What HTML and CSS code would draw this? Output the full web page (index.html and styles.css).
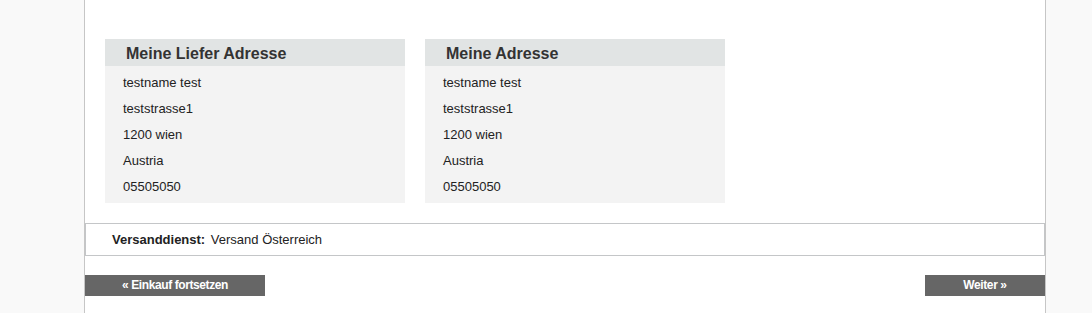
FILE: index.html
```html
<!DOCTYPE html>
<html lang="de">

<head>
    <meta charset="UTF-8" />
    <title>Bestellung - Adressen</title>
    <link rel="stylesheet" href="styles.css">
</head>

<body>
    <div class="page">
        <!-- Adressen -->
        <div class="addresses">
            <div class="address-box">
                <h3>Meine Liefer Adresse</h3>
                <ul>
                    <li>testname test</li>
                    <li>teststrasse1</li>
                    <li>1200 wien</li>
                    <li>Austria</li>
                    <li>05505050</li>
                </ul>
            </div>
            <div class="address-box">
                <h3>Meine Adresse</h3>
                <ul>
                    <li>testname test</li>
                    <li>teststrasse1</li>
                    <li>1200 wien</li>
                    <li>Austria</li>
                    <li>05505050</li>
                </ul>
            </div>
        </div>

        <!-- Versand -->
        <div class="shipping">
            <strong>Versanddienst:</strong> Versand Österreich
        </div>

        <!-- Navigation -->
        <div class="nav-buttons">
            <a href="#" class="btn btn-back">« Einkauf fortsetzen</a>
            <a href="#" class="btn btn-next">Weiter »</a>
        </div>
    </div>
</body>

</html>
```

FILE: styles.css
```css
/* Global */
body {
    margin: 0;
    background: #f9f9f9;
    font-family: "Liberation Sans", Arial, sans-serif;
    font-size: 13px;
    color: #222;
}

.page {
    margin-left: 84px;
    width: 960px;
    min-height: 313px;
    background: #fff;
    border-left: 1px solid #c6c6c6;
    border-right: 1px solid #c6c6c6;
}

/* Addresses */
.addresses {
    display: flex;
    gap: 20px;
    padding: 39px 0 0 20px;
}

.address-box {
    width: 300px;
    background: #f3f3f3;
}

.address-box h3 {
    margin: 0;
    height: 25px;
    line-height: 26px;
    padding: 2px 0 0 21px;
    background: #e1e4e4;
    font-size: 16px;
    color: #333;
}

.address-box ul {
    list-style: none;
    margin: 0;
    padding: 4px 0 3px 18px;
}

.address-box li {
    line-height: 26px;
}

/* Shipping */
.shipping {
    margin-top: 20px;
    height: 31px;
    line-height: 31px;
    padding-left: 26px;
    border: 1px solid #c4c6c8;
}

.shipping strong {
    margin-right: 2px;
}

/* Buttons */
.nav-buttons {
    display: flex;
    justify-content: space-between;
    margin-top: 19px;
}

.btn {
    display: block;
    height: 21px;
    line-height: 21px;
    background: #666;
    color: #fff;
    font-size: 12px;
    font-weight: bold;
    letter-spacing: -0.4px;
    text-align: center;
    text-decoration: none;
}

.btn-back {
    width: 180px;
}

.btn-next {
    width: 120px;
}
```
